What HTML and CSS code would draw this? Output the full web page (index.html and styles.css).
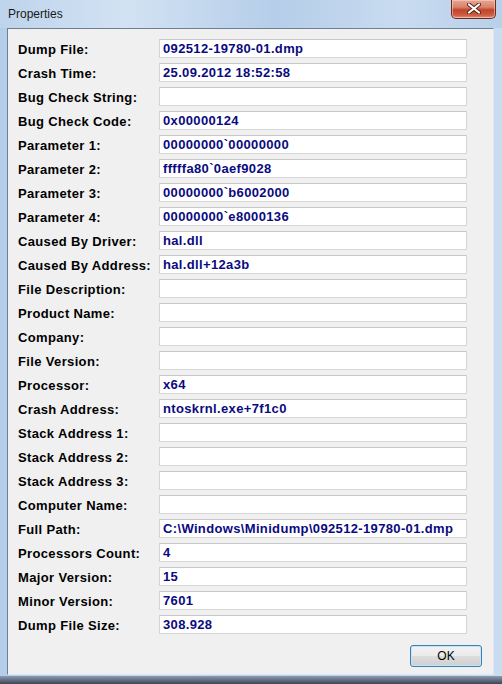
FILE: index.html
```html
<!DOCTYPE html>
<html>
<head>
<meta charset="utf-8">
<link rel="stylesheet" href="styles.css">
</head>
<body>
<div class="window">
  <div class="titlebar">
    <span class="title">Properties</span>
    <div class="close">
      <svg width="14" height="11" viewBox="0 0 14 11">
        <path d="M2 1.5 L12 9.5 M12 1.5 L2 9.5" stroke="#5a2218" stroke-width="4" stroke-linecap="round"/>
        <path d="M2 1.5 L12 9.5 M12 1.5 L2 9.5" stroke="#ffffff" stroke-width="2.2" stroke-linecap="round"/>
      </svg>
    </div>
  </div>
  <div class="frame">
    <div class="client">
      <div class="rows">
        <div class="row"><span class="label">Dump File:</span><span class="field">092512-19780-01.dmp</span></div>
        <div class="row"><span class="label">Crash Time:</span><span class="field">25.09.2012 18:52:58</span></div>
        <div class="row"><span class="label">Bug Check String:</span><span class="field"></span></div>
        <div class="row"><span class="label">Bug Check Code:</span><span class="field">0x00000124</span></div>
        <div class="row"><span class="label">Parameter 1:</span><span class="field">00000000`00000000</span></div>
        <div class="row"><span class="label">Parameter 2:</span><span class="field">fffffa80`0aef9028</span></div>
        <div class="row"><span class="label">Parameter 3:</span><span class="field">00000000`b6002000</span></div>
        <div class="row"><span class="label">Parameter 4:</span><span class="field">00000000`e8000136</span></div>
        <div class="row"><span class="label">Caused By Driver:</span><span class="field">hal.dll</span></div>
        <div class="row"><span class="label">Caused By Address:</span><span class="field">hal.dll+12a3b</span></div>
        <div class="row"><span class="label">File Description:</span><span class="field"></span></div>
        <div class="row"><span class="label">Product Name:</span><span class="field"></span></div>
        <div class="row"><span class="label">Company:</span><span class="field"></span></div>
        <div class="row"><span class="label">File Version:</span><span class="field"></span></div>
        <div class="row"><span class="label">Processor:</span><span class="field">x64</span></div>
        <div class="row"><span class="label">Crash Address:</span><span class="field">ntoskrnl.exe+7f1c0</span></div>
        <div class="row"><span class="label">Stack Address 1:</span><span class="field"></span></div>
        <div class="row"><span class="label">Stack Address 2:</span><span class="field"></span></div>
        <div class="row"><span class="label">Stack Address 3:</span><span class="field"></span></div>
        <div class="row"><span class="label">Computer Name:</span><span class="field"></span></div>
        <div class="row"><span class="label">Full Path:</span><span class="field">C:\Windows\Minidump\092512-19780-01.dmp</span></div>
        <div class="row"><span class="label">Processors Count:</span><span class="field">4</span></div>
        <div class="row"><span class="label">Major Version:</span><span class="field">15</span></div>
        <div class="row"><span class="label">Minor Version:</span><span class="field">7601</span></div>
        <div class="row"><span class="label">Dump File Size:</span><span class="field">308.928</span></div>
      </div>
      <div class="buttons"><button class="ok">OK</button></div>
    </div>
  </div>
  <div class="taskstrip"></div>
</div>
</body>
</html>
```

FILE: styles.css
```css
html, body {
  margin: 0;
  padding: 0;
  background: #2b3440;
}
.window {
  width: 502px;
  height: 684px;
  display: flex;
  flex-direction: column;
  background: linear-gradient(90deg, #b4cde8 0%, #c5d9ef 30%, #b9d1ea 60%, #c9dcf0 100%);
  overflow: hidden;
}
.titlebar {
  height: 28px;
  flex: none;
  display: flex;
  align-items: flex-start;
  justify-content: space-between;
  background: linear-gradient(90deg, #bed4ec 0%, #d2e2f3 25%, #b6cee9 55%, #c8dbf0 80%, #b9d0ea 100%);
}
.title {
  font-family: "Liberation Sans", Arial, sans-serif;
  font-size: 12px;
  color: #1a1a1a;
  margin: 7px 0 0 8px;
}
.close {
  width: 45px;
  height: 19px;
  margin-right: 6px;
  box-sizing: border-box;
  border: 1px solid #6f2a20;
  border-top: none;
  border-radius: 0 0 5px 5px;
  background: linear-gradient(180deg, #e7a792 0%, #d9826a 40%, #c1432b 55%, #cf5c42 85%, #e39a7f 100%);
  display: flex;
  align-items: center;
  justify-content: center;
  box-shadow: inset 0 0 0 1px rgba(255,220,210,0.5);
}
.close svg {
  display: block;
  margin-top: -1px;
}
.frame {
  flex: none;
  height: 647px;
  padding: 0 8px 0 7px;
}
.client {
  height: 100%;
  box-sizing: border-box;
  background: #f0f0f0;
  border: 1px solid #6f7f92;
  border-color: #6f7f92 #dfe8f2 #dfe8f2 #6f7f92;
  padding: 10px 0 0 10px;
  display: flex;
  flex-direction: column;
}
.rows {
  display: flex;
  flex-direction: column;
  gap: 5px;
}
.row {
  display: flex;
  align-items: center;
  height: 19px;
}
.label {
  width: 141px;
  font-family: "Liberation Sans", Arial, sans-serif;
  font-weight: bold;
  font-size: 13px;
  letter-spacing: 0.35px;
  color: #000000;
  padding-top: 1px;
}
.field {
  width: 308px;
  height: 19px;
  box-sizing: border-box;
  background: #ffffff;
  border: 1px solid #d5d5d5;
  border-top-color: #c8c8c8;
  padding: 0 0 0 3px;
  font-family: "Liberation Sans", Arial, sans-serif;
  font-weight: bold;
  font-size: 13px;
  letter-spacing: 0.35px;
  line-height: 17px;
  color: #0a0a80;
  white-space: nowrap;
  overflow: hidden;
}
.buttons {
  display: flex;
  justify-content: flex-end;
  padding: 11px 11px 0 0;
}
.ok {
  width: 72px;
  height: 22px;
  border: 1px solid #3c7fb1;
  border-radius: 3px;
  background: linear-gradient(180deg, #f2f2f2 0%, #ebebeb 50%, #dddddd 51%, #cfcfcf 100%);
  box-shadow: inset 0 0 0 1px #c4e5f6;
  font-family: "Liberation Sans", Arial, sans-serif;
  font-size: 12px;
  color: #000;
  padding: 0;
}
.taskstrip {
  flex: none;
  margin-top: 1px;
  height: 8px;
  background: linear-gradient(180deg, #8d9bb0, #3a4454);
}
```
